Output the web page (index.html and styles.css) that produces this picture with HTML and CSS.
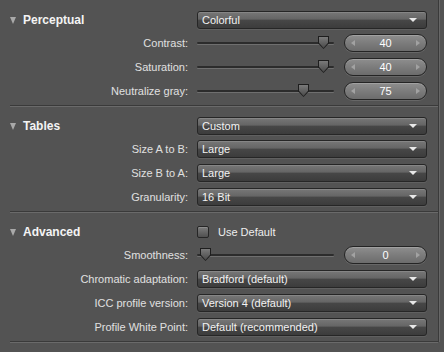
FILE: index.html
```html
<!DOCTYPE html>
<html>
<head>
<meta charset="utf-8">
<link rel="stylesheet" href="styles.css">
</head>
<body>
<div class="panel">
  <section class="sec">
    <div class="row head">
      <div class="title"><span class="tri"></span>Perceptual</div>
      <div class="select"><span>Colorful</span><i class="caret"></i></div>
    </div>
    <div class="row">
      <label class="lbl">Contrast:</label>
      <div class="slider">
        <div class="track"><span class="thumb" style="left:121px"></span></div>
        <div class="spin"><i class="sl"></i><span>40</span><i class="sr"></i></div>
      </div>
    </div>
    <div class="row">
      <label class="lbl">Saturation:</label>
      <div class="slider">
        <div class="track"><span class="thumb" style="left:121px"></span></div>
        <div class="spin"><i class="sl"></i><span>40</span><i class="sr"></i></div>
      </div>
    </div>
    <div class="row">
      <label class="lbl">Neutralize gray:</label>
      <div class="slider">
        <div class="track"><span class="thumb" style="left:101px"></span></div>
        <div class="spin"><i class="sl"></i><span>75</span><i class="sr"></i></div>
      </div>
    </div>
  </section>

  <section class="sec">
    <div class="row head">
      <div class="title"><span class="tri"></span>Tables</div>
      <div class="select"><span>Custom</span><i class="caret"></i></div>
    </div>
    <div class="row">
      <label class="lbl">Size A to B:</label>
      <div class="select"><span>Large</span><i class="caret"></i></div>
    </div>
    <div class="row">
      <label class="lbl">Size B to A:</label>
      <div class="select"><span>Large</span><i class="caret"></i></div>
    </div>
    <div class="row">
      <label class="lbl">Granularity:</label>
      <div class="select"><span>16 Bit</span><i class="caret"></i></div>
    </div>
  </section>

  <section class="sec">
    <div class="row head">
      <div class="title"><span class="tri"></span>Advanced</div>
      <div class="check"><span class="box"></span><span>Use Default</span></div>
    </div>
    <div class="row">
      <label class="lbl">Smoothness:</label>
      <div class="slider">
        <div class="track"><span class="thumb" style="left:3px"></span></div>
        <div class="spin"><i class="sl"></i><span>0</span><i class="sr"></i></div>
      </div>
    </div>
    <div class="row">
      <label class="lbl">Chromatic adaptation:</label>
      <div class="select"><span>Bradford (default)</span><i class="caret"></i></div>
    </div>
    <div class="row">
      <label class="lbl">ICC profile version:</label>
      <div class="select"><span>Version 4 (default)</span><i class="caret"></i></div>
    </div>
    <div class="row">
      <label class="lbl">Profile White Point:</label>
      <div class="select"><span>Default (recommended)</span><i class="caret"></i></div>
    </div>
  </section>
</div>
</body>
</html>
```

FILE: styles.css
```css
html, body {
  margin: 0;
  padding: 0;
  background: #535353;
  width: 444px;
  height: 352px;
  overflow: hidden;
  font-family: "Liberation Sans", Arial, sans-serif;
  font-size: 11px;
  color: #e2e2e2;
}

.panel {
  margin-left: 10px;
  width: 428px;
  border-right: 1px solid #3a3a3a;
  box-shadow: 1px 0 0 #676767;
}

.sec {
  padding: 9px 0 2px;
  border-bottom: 1px solid #3a3a3a;
  box-shadow: 0 1px 0 #6a6a6a;
}

.row {
  display: grid;
  grid-template-columns: 178px 230px;
  column-gap: 9px;
  height: 24px;
  align-items: center;
}

.row.head {
  height: 22px;
}

.title {
  display: flex;
  align-items: center;
  font-weight: bold;
  font-size: 12px;
  color: #f4f4f4;
}

.tri {
  width: 0;
  height: 0;
  border-left: 3.5px solid transparent;
  border-right: 3.5px solid transparent;
  border-top: 7px solid #a9a9a9;
  margin-right: 7px;
  margin-top: 1px;
}

.lbl {
  text-align: right;
  color: #e0e0e0;
}

.select {
  height: 16px;
  border: 1px solid #262626;
  border-radius: 3px;
  background: linear-gradient(#777777 0, #656565 45%, #474747 50%, #3c3c3c 100%);
  box-shadow: inset 0 1px 0 rgba(255,255,255,0.12), 0 1px 0 rgba(255,255,255,0.08);
  display: flex;
  align-items: center;
  justify-content: space-between;
  padding: 0 9px 0 4px;
  color: #f2f2f2;
}

.caret {
  width: 0;
  height: 0;
  border-left: 4px solid transparent;
  border-right: 4px solid transparent;
  border-top: 4px solid #e8e8e8;
}

.slider {
  display: flex;
  align-items: center;
  column-gap: 10px;
}

.track {
  position: relative;
  flex: 1;
  height: 2px;
  border-radius: 1px;
  background: #2c2c2c;
  box-shadow: 0 1px 0 #6f6f6f;
}

.thumb {
  position: absolute;
  top: -6px;
  width: 11px;
  height: 13px;
  background:
    linear-gradient(#6e6e6e, #3a3a3a);
  clip-path: polygon(0 0, 100% 0, 100% 55%, 50% 100%, 0 55%);
}

.thumb::before {
  content: "";
  position: absolute;
  inset: 1px;
  background: linear-gradient(#7a7a7a, #4a4a4a);
  clip-path: polygon(0 0, 100% 0, 100% 52%, 50% 100%, 0 52%);
}

.thumb {
  background: #1e1e1e;
}

.spin {
  width: 69px;
  height: 16px;
  border: 1px solid #242424;
  border-radius: 9px;
  background: linear-gradient(#8e8e8e 0, #7c7c7c 50%, #6c6c6c 100%);
  box-shadow: inset 0 1px 0 rgba(255,255,255,0.18), 0 1px 0 rgba(255,255,255,0.12);
  display: flex;
  align-items: center;
  justify-content: space-between;
  padding: 0 6px;
  box-sizing: content-box;
  color: #ffffff;
  font-size: 11px;
}

.spin span {
  flex: 1;
  text-align: center;
}

.sl, .sr {
  width: 0;
  height: 0;
  border-top: 3.5px solid transparent;
  border-bottom: 3.5px solid transparent;
}

.sl { border-right: 4px solid #a2a2a2; }
.sr { border-left: 4px solid #a2a2a2; }

.check {
  display: flex;
  align-items: center;
  column-gap: 9px;
  color: #eeeeee;
}

.box {
  width: 10px;
  height: 10px;
  border: 1px solid #262626;
  border-radius: 2px;
  background: linear-gradient(#7c7c7c, #505050);
  box-shadow: inset 0 1px 0 rgba(255,255,255,0.15);
}
```
